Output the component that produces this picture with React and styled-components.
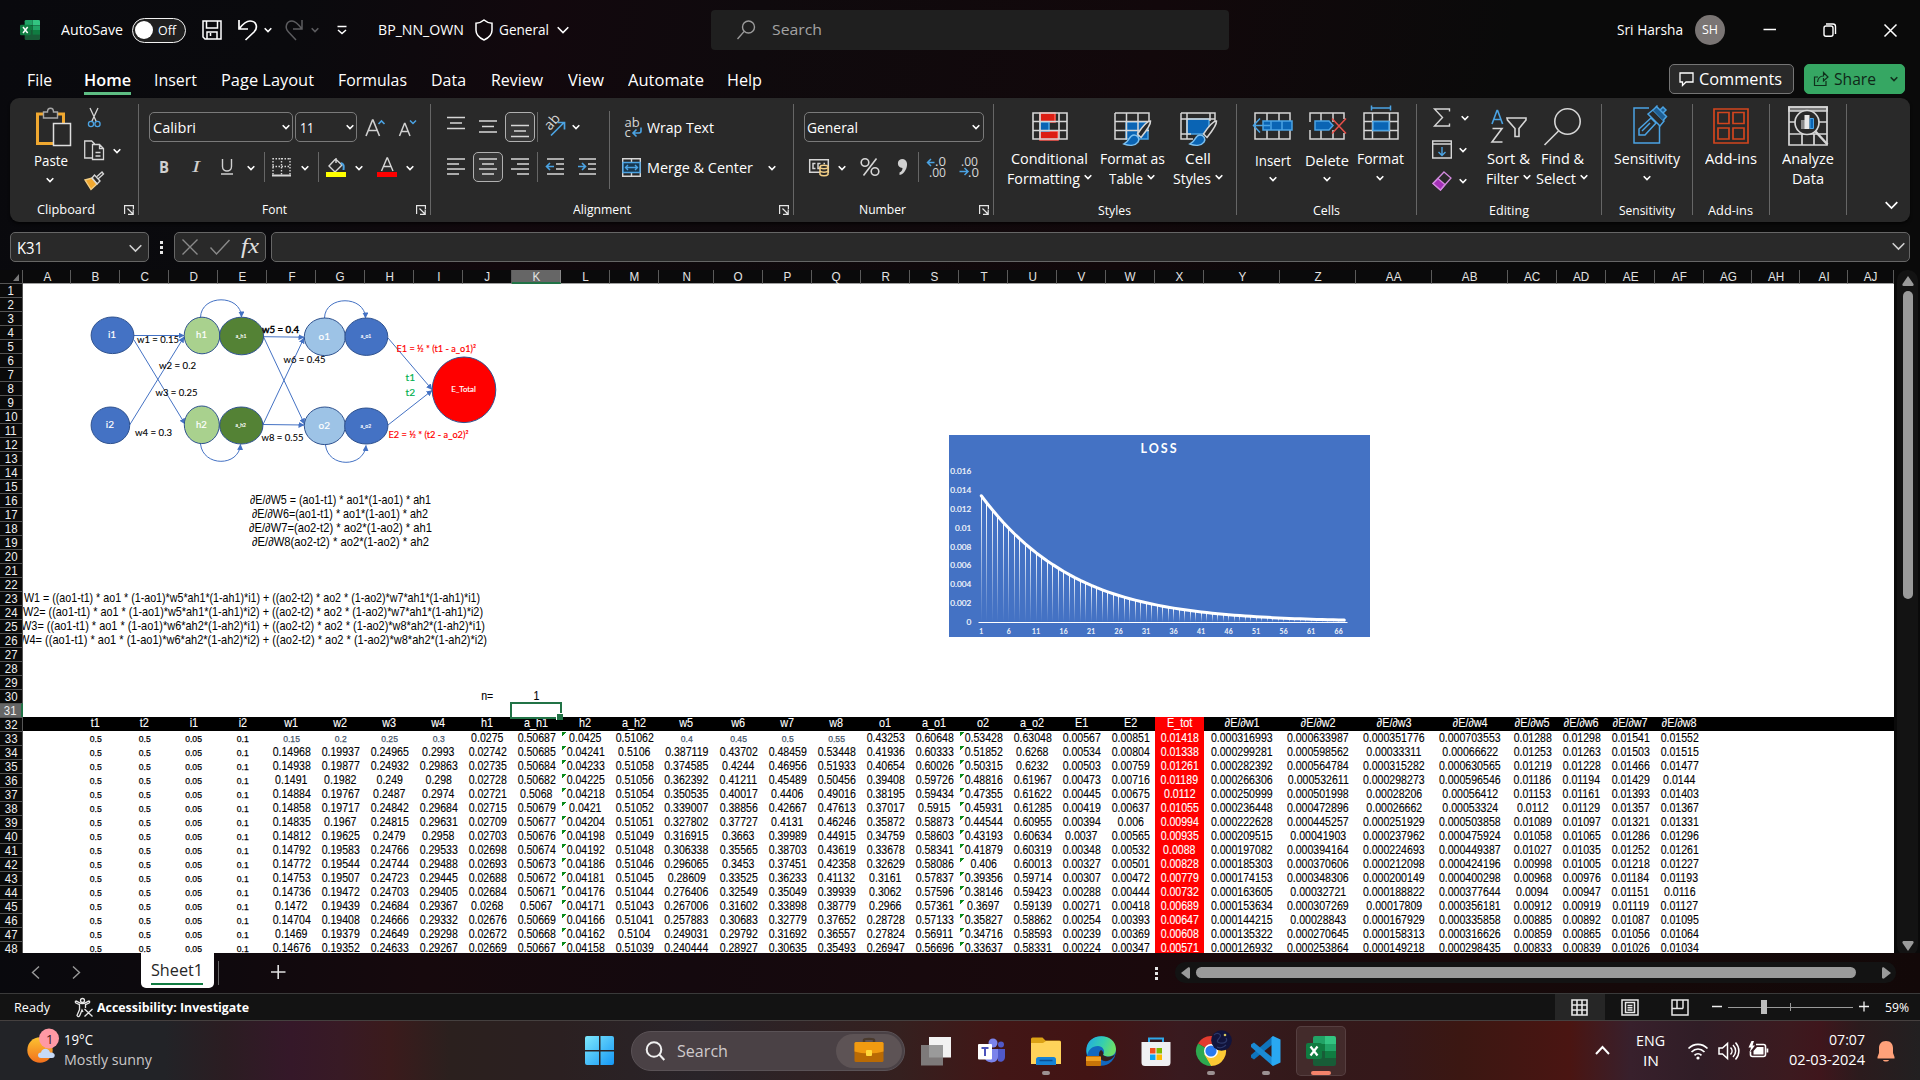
import React, { useLayoutEffect, useRef, useState } from 'react';
import styled, { createGlobalStyle } from 'styled-components';

const Global = createGlobalStyle`
  * { box-sizing: border-box; }
  html, body { margin: 0; padding: 0; background: #0a0a0c; overflow: hidden; }
  body { font-family: "Open Sans", "Noto Sans", sans-serif; color: #fff; }
  svg { display: block; flex: none; }
`;

/* ---------- text that keeps a fixed advance width ---------- */
const FitBox = styled.span`
  display: block;
  flex: none;
  width: ${p => p.$w}px;
  margin-left: ${p => p.$ml || 0}px;
  margin-top: ${p => p.$mt || 0}px;
  font-size: ${p => p.$s}px;
  font-weight: ${p => p.$b || 400};
  font-family: ${p => p.$f || 'inherit'};
  color: ${p => p.$c || 'inherit'};
  line-height: 20px;
  height: 20px;
  white-space: nowrap;
`;
const FitInner = styled.span`
  display: inline-block;
  transform-origin: 0 50%;
`;
function T({ w, s = 14.5, ml, mt, b, c, f, children }) {
  const ref = useRef(null);
  const [k, setK] = useState(1);
  useLayoutEffect(() => {
    const width = ref.current.getBoundingClientRect().width;
    if (width) setK(w / width);
  }, []);
  return (
    <FitBox $w={w} $s={s} $ml={ml} $mt={mt} $b={b} $c={c} $f={f}>
      <FitInner ref={ref} style={{ transform: `scaleX(${k})` }}>{children}</FitInner>
    </FitBox>
  );
}

/* ---------- drawing helpers ---------- */
const Drawing = styled.svg`
  width: ${p => p.$w}px;
  height: ${p => p.$h}px;
  margin-left: ${p => p.$ml || 0}px;
  margin-top: ${p => p.$mt || 0}px;
  overflow: visible;
`;
function Pic({ b, ml, mt, s = '#d6d6d6', sw = 1.4, children }) {
  const [, , w, h] = b.split(' ');
  return (
    <Drawing viewBox={b} $w={w} $h={h} $ml={ml} $mt={mt} fill="none" stroke={s} strokeWidth={sw}>
      {children}
    </Drawing>
  );
}
const Chev = ({ w = 8, ml, mt, c = '#fff', sw = 1.6 }) => (
  <Drawing viewBox={`0 0 ${w} ${w / 2 + 2}`} $w={w} $h={w / 2 + 2} $ml={ml} $mt={mt} fill="none" stroke={c} strokeWidth={sw}>
    <path d={`M.7 1.2L${w / 2} ${w / 2 + 0.5}L${w - 0.7} 1.2`} />
  </Drawing>
);

/* ---------- frame ---------- */
const Window = styled.div`
  width: 1920px;
  height: 1080px;
  display: flex;
  flex-direction: column;
  background: linear-gradient(100deg, #09090d 0%, #0a0a0d 14%, #12080d 26%, #0f0a0d 36%, #12080b 55%, #0a0a0a 72%, #0a0a0a 100%);
`;
const Row = styled.div`
  display: flex;
  align-items: ${p => p.$a || 'center'};
  height: ${p => p.$h}px;
  margin-left: ${p => p.$ml || 0}px;
  margin-top: ${p => p.$mt || 0}px;
  padding-top: ${p => p.$pt || 0}px;
  flex: none;
`;
const Col = styled.div`
  display: flex;
  flex-direction: column;
  flex: none;
  width: ${p => p.$w ? p.$w + 'px' : 'auto'};
  margin-left: ${p => p.$ml || 0}px;
  padding-top: ${p => p.$pt || 0}px;
  align-items: ${p => p.$a || 'flex-start'};
`;

/* ---------- title bar ---------- */
const Toggle = styled.div`
  width: 54px;
  height: 25px;
  margin-left: 9px;
  border: 1.5px solid #f2f2f2;
  border-radius: 13px;
  background: #202020;
  display: flex;
  align-items: center;
  padding-left: 2px;
`;
const Knob = styled.div`
  width: 18px;
  height: 18px;
  border-radius: 50%;
  background: #fff;
`;
const SearchBox = styled.div`
  width: 518px;
  height: 40px;
  margin-left: 142px;
  border-radius: 4px;
  background: #1f1f1f;
  display: flex;
  align-items: center;
`;
const Avatar = styled.div`
  width: 30px;
  height: 30px;
  margin-left: 12px;
  border-radius: 50%;
  background: #7a7574;
  display: flex;
  align-items: center;
  justify-content: center;
`;
const ExcelLogo = ({ ml, size = 20 }) => (
  <Drawing viewBox="0 0 30 30" $w={size} $h={size} $ml={ml} fill="none">
    <path d="M9 0h10v8H7V2a2 2 0 0 1 2-2z" fill="#21a366" />
    <path d="M19 0h9a2 2 0 0 1 2 2v6H19z" fill="#33c481" />
    <path d="M7 8h12v7H7z" fill="#107c41" />
    <path d="M19 8h11v7H19z" fill="#21a366" />
    <path d="M7 15h23v13a2 2 0 0 1-2 2H9a2 2 0 0 1-2-2z" fill="#185c37" />
    <path d="M19 15h11v7H19z" fill="#107c41" />
    <rect x="0" y="7" width="16" height="16" rx="2" fill="#107c41" />
    <path d="M4.500 10.500l7 9M11.500 10.500l-7 9" stroke="#fff" strokeWidth="2.200" />
  </Drawing>
);

function TitleBar() {
  return (
    <Row $h={60}>
      <ExcelLogo ml={20} />
      <T ml={21} w={62}>AutoSave</T>
      <Toggle><Knob /><T ml={5} w={18} s={13.5}>Off</T></Toggle>
      <Pic b="202 20 20 20" ml={16} s="#fff" sw={1.5}>
        <path d="M203 21h18v18h-16l-2-2zM206.500 21v7h11v-7M207 39v-7h10v7M210.500 33v3" />
      </Pic>
      <Pic b="237 19 20 22" ml={15} s="#fff" sw={1.7}>
        <path d="M239 20v9h9M239.500 28.500c3-4 6-7.500 10.500-7.500 7 0 8 7 4 11l-8.500 8" />
      </Pic>
      <Chev ml={7} w={8} />
      <Pic b="286 19 18 22" ml={13} s="#5c5c5f" sw={1.5}>
        <path d="M303 20v9h-9M302.500 28.500c-3-4-6-7.500-9.500-7.500-6 0-7.500 7-3.500 11l7.500 8" />
      </Pic>
      <Chev ml={8} c="#5c5c5f" />
      <Pic b="337 26 10 10" ml={18} s="#fff" sw={1.5}><path d="M337.500 27.500h9M338 31l4 3.500 4-3.500" /></Pic>
      <T ml={31} w={86}>BP_NN_OWN</T>
      <Pic b="476 19 18 22" ml={11} s="#fff" sw={1.5}>
        <path d="M485 20c2.500 2.200 5 3 8 3.300v7c0 4.500-3 7.500-8 9.700-5-2.200-8-5.200-8-9.700v-7c3-.3 5.500-1.100 8-3.300z" />
      </Pic>
      <T ml={6} w={50}>General</T>
      <Chev ml={8} w={12} />
      <SearchBox>
        <Pic b="738 20 18 20" ml={26} s="#9b9b9b" sw={1.4}><circle cx="749.500" cy="27" r="6" /><path d="M745.200 31.400L738.500 39" /></Pic>
        <T ml={17} w={50} c="#a3a3a3">Search</T>
      </SearchBox>
      <T ml={388} w={66} s={14}>Sri Harsha</T>
      <Avatar><T w={16} s={12}>SH</T></Avatar>
      <Pic b="1763 29 13 2" ml={38} s="#fff" sw={1.5}><path d="M1763.500 29.500h12.500" /></Pic>
      <Pic b="1823 23 13 14" ml={47} s="#fff" sw={1.4}>
        <rect x="1824" y="26" width="9" height="10.300" rx="2" /><path d="M1826 24h7a2.500 2.500 0 0 1 2.500 2.500v7.500" />
      </Pic>
      <Pic b="1883 24 13 13" ml={48} s="#fff" sw={1.5}><path d="M1883.500 24.500l12 12M1895.500 24.500l-12 12" /></Pic>
    </Row>
  );
}

/* ---------- ribbon tabs ---------- */
const TabItem = styled.div`
  margin-left: ${p => p.$ml}px;
  padding-top: 2px;
  height: 27px;
  border-bottom: 3px solid ${p => (p.$on ? '#5dbd83' : 'transparent')};
`;
const PillButton = styled.div`
  width: ${p => p.$w}px;
  height: 30px;
  margin-left: ${p => p.$ml}px;
  margin-top: -4px;
  border-radius: 5px;
  border: 1px solid ${p => (p.$green ? '#36a763' : '#757575')};
  background: ${p => (p.$green ? '#36a763' : '#292929')};
  display: flex;
  align-items: center;
`;
const TABS = [['File', 27, 25], ['Home', 32, 47], ['Insert', 23, 43], ['Page Layout', 24, 93], ['Formulas', 24, 69], ['Data', 24, 35], ['Review', 25, 52], ['View', 25, 36], ['Automate', 24, 76], ['Help', 23, 35]];
function RibbonTabs() {
  return (
    <Row $h={38} $a="flex-start" $pt={8}>
      {TABS.map(([t, ml, w]) => (
        <TabItem key={t} $ml={ml} $on={t === 'Home'}>
          <T w={w} s={16.3} b={t === 'Home' ? 600 : 400}>{t}</T>
        </TabItem>
      ))}
      <PillButton $w={125} $ml={907}>
        <Pic b="1679 71 15 15" ml={9} s="#fff" sw={1.3}><path d="M1680 72h13v9h-7l-3.500 3.500V81H1680z" /></Pic>
        <T ml={5} w={83} s={16} b={500}>Comments</T>
      </PillButton>
      <PillButton $w={101} $ml={10} $green>
        <Pic b="1814 72 14 14" ml={9} s="#10301c" sw={1.2}>
          <path d="M1818 77h-3.500v8.500h11.500V81M1817.500 82c.5-4 3-6 6-6v-3.500l4.500 4.500-4.500 4V78" />
        </Pic>
        <T ml={6} w={42} s={16} c="#0f2718">Share</T>
        <Chev ml={14} w={8} c="#10301c" />
      </PillButton>
    </Row>
  );
}

/* ---------- ribbon ---------- */
const RibbonPanel = styled.div`
  display: flex;
  height: 124px;
  width: 1900px;
  margin-left: 10px;
  border-radius: 9px;
  background: #292929;
  box-shadow: 0 2px 3px rgba(0, 0, 0, 0.6);
`;
const Group = styled.div`
  width: ${p => p.$w}px;
  height: 124px;
  display: flex;
  flex-direction: column;
  flex: none;
`;
const GroupBody = styled.div`
  height: 102px;
  display: flex;
  flex: none;
`;
const GroupSep = styled.div`
  width: 1px;
  flex: none;
  height: ${p => p.$h || 111}px;
  margin: ${p => (p.$mt === undefined ? 6 : p.$mt)}px 0 0 ${p => p.$ml || 0}px;
  background: #666;
`;
const Launcher = ({ ml }) => (
  <Pic b="0 0 10 10" ml={ml} s="#e6e6e6" sw={1.2}><path d="M.6 9V.6H9.400V4M3.500 3.500l5 5M9.200 4.500v4.900H4" /></Pic>
);
const Box = styled.div`
  width: ${p => p.$w}px;
  height: 30px;
  margin-left: ${p => p.$ml || 0}px;
  border: 1px solid ${p => p.$line || '#7a7a7a'};
  border-radius: 5px;
  background: ${p => p.$bg || '#292929'};
  display: flex;
  flex: none;
  align-items: center;
`;
const hl = (x1, x2, ...ys) => ys.map(y => `M${x1} ${y}h${x2 - x1}`).join('');

function Clipboard() {
  return (
    <Group $w={128}>
      <GroupBody>
        <Col $ml={24} $w={50} $a="flex-start">
          <Pic b="34 98 40 53" >
            <path d="M37.500 114h26v29.500h-26z" fill="none" stroke="#f0a830" strokeWidth="3" />
            <path d="M43.500 118v-6h4c0-5 6-5 6 0h4v6z" fill="#292929" stroke="#a8a8a8" />
            <path d="M53.500 123.500h17v22h-17z" fill="#292929" stroke="#dedede" strokeWidth="1.500" />
          </Pic>
          <T w={34} mt={0}>Paste</T>
          <Chev ml={12} mt={6} />
        </Col>
        <Col>
          <Row $h={22} $mt={9}>
            <Pic b="84 108 20 20" sw={1.3}>
              <path d="M90 108l6.500 14M98 108l-6.500 14" />
              <circle cx="91" cy="124" r="2.600" stroke="#4ba3e3" /><circle cx="97.500" cy="124" r="2.600" stroke="#4ba3e3" />
            </Pic>
          </Row>
          <Row $h={22} $mt={10}>
            <Pic b="84 139 20 20" sw={1.3}>
              <path d="M93 157h-8.300v-17h7l3 3M92.500 143.500h7l4 4v11h-11zM99.500 143.500v4h4M95.500 151.500h5M95.500 155h5" />
            </Pic>
            <Chev ml={9} mt={1} />
          </Row>
          <Row $h={22} $mt={9}>
            <Pic b="84 171 20 20">
              <path d="M85 180l7-2 5 6-6 5.500z" fill="#f0a830" stroke="#f3cf86" /><path d="M92 178l5 6 3-3-5.500-6zM97 176.500l5-4.500 1.500 2-5 4.500" />
            </Pic>
          </Row>
        </Col>
      </GroupBody>
      <Row $h={20}><T ml={27} w={58} s={12.6}>Clipboard</T><Launcher ml={29} /></Row>
    </Group>
  );
}

function FontGroup() {
  return (
    <Group $w={291}>
      <GroupBody>
        <Col $pt={14}>
          <Row $h={30}>
            <Box $ml={10} $w={144}><T ml={3} w={43} mt={1}>Calibri</T><Chev ml={86} /></Box>
            <Box $ml={2} $w={62}><T ml={4} w={14} mt={1}>11</T><Chev ml={32} /></Box>
            <Pic b="365 115 20 20" ml={8} s="#d0d0d0" sw={1.6}><path d="M366 134l6.500-16h.5l6.500 16M368.500 128.500h9" /><path d="M378.500 122l3-3 3 3" stroke="#4ba3e3" /></Pic>
            <Pic b="399 115 18 20" ml={14} s="#d0d0d0" sw={1.5}><path d="M399.500 134l5-12.500h.5l5 12.500M401.500 129.500h7" /><path d="M410 118.500l3 3 3-3" stroke="#4ba3e3" /></Pic>
          </Row>
          <Row $h={30} $mt={10}>
            <T ml={20} w={10} s={16.500} b={700} c="#d0d0d0">B</T>
            <T ml={23} w={8} s={17} c="#d0d0d0" f='"Liberation Serif", serif'><i>I</i></T>
            <Pic b="221 158 12 18" ml={21} s="#d0d0d0"><path d="M222.500 159v7.500c0 6 9 6 9 0V159M221 174h12" /></Pic>
            <Chev ml={14} mt={2} />
            <GroupSep $ml={9} $h={30} $mt={0} />
            <Pic b="272 158 20 19" ml={7}><path d="M272.500 158.700h18M272.500 166.500h18M273 158v17M281.500 158v17M290 158v17" strokeDasharray="1.500 1.500" /><path d="M272 175.500h19" strokeWidth="2" /></Pic>
            <Chev ml={9} mt={2} />
            <GroupSep $ml={9} $h={30} $mt={0} />
            <Pic b="326 157 20 20" ml={7} mt={0}>
              <path d="M329 166l6.500-7 6.500 6-7 7zM336 163v-5" /><path d="M341 163c3 1 3 3 2.500 7" stroke="#4ba3e3" strokeWidth="2" /><path d="M326 174.500h20" stroke="#ff0" strokeWidth="5" />
            </Pic>
            <Chev ml={9} mt={2} />
            <Pic b="377 157 20 20" ml={14}><path d="M381.500 171l5.500-13h.5l5.500 13M383.500 166.500h7.500" /><path d="M377 174.500h20" stroke="#f00" strokeWidth="5" /></Pic>
            <Chev ml={9} mt={2} />
          </Row>
        </Col>
      </GroupBody>
      <Row $h={20}><T ml={123} w={25} s={12.6}>Font</T><Launcher ml={129} /></Row>
    </Group>
  );
}

function Alignment() {
  return (
    <Group $w={362}>
      <GroupBody>
        <Col $pt={14}>
          <Row $h={30}>
            <Pic b="447 112 18 30" ml={16} sw={1.6}><path d={hl(447, 465, 117.500, 128.500) + hl(450, 462, 123)} /></Pic>
            <Pic b="479 112 18 30" ml={14} sw={1.6}><path d={hl(479, 497, 121, 132) + hl(482, 494, 126.500)} /></Pic>
            <Box $ml={8} $w={30} $line="#b0b0b0" $bg="#363636"><Pic b="511 112 18 30" ml={5} sw={1.6}><path d={hl(511, 529, 125.500, 136.500) + hl(514, 526, 131)} /></Pic></Box>
            <GroupSep $ml={2} $h={30} $mt={0} />
            <Pic b="545 115 21 24" ml={7} sw={1.7} s="#4ba3e3">
              <text x="0" y="0" transform="translate(550 131) rotate(-48)" fontSize="14" fill="#d6d6d6" stroke="none">ab</text>
              <path d="M551 135.500l13-13M557.500 122.500h7v7" />
            </Pic>
            <Chev ml={6} />
          </Row>
          <Row $h={30} $mt={10}>
            <Pic b="447 152 18 30" ml={16} sw={1.6}><path d={hl(447, 465, 159, 169) + hl(447, 459, 164, 174)} /></Pic>
            <Box $ml={8} $w={30} $line="#b0b0b0" $bg="#363636"><Pic b="479 152 18 30" ml={5} sw={1.6}><path d={hl(479, 497, 159, 169) + hl(482, 494, 164, 174)} /></Pic></Box>
            <Pic b="511 152 18 30" ml={8} sw={1.6}><path d={hl(511, 529, 159, 169) + hl(517, 529, 164, 174)} /></Pic>
            <GroupSep $ml={8} $h={30} $mt={0} />
            <Pic b="546 152 18 30" ml={8} sw={1.6}><path d={hl(547, 564, 159, 174) + hl(556, 564, 164, 169)} /><path d="M547 166.500h7M550 163l-3.500 3.500 3.500 3.500" stroke="#4ba3e3" /></Pic>
            <Pic b="578 152 18 30" ml={14} sw={1.6}><path d={hl(579, 596, 159, 174) + hl(588, 596, 164, 169)} /><path d="M578 166.500h7M582 163l3.500 3.500-3.500 3.500" stroke="#4ba3e3" /></Pic>
          </Row>
        </Col>
        <GroupSep $h={78} $mt={13} $ml={13} />
        <Col $pt={14}>
          <Row $h={30}>
            <Pic b="625 116 18 22" ml={15} sw={1.6}>
              <text x="624.500" y="126.500" fontSize="13" fill="#d6d6d6" stroke="none">ab</text>
              <text x="624.500" y="136.500" fontSize="13" fill="#d6d6d6" stroke="none">c</text>
              <path d="M641 127.500v3.500c0 1.500-1 2-2 2h-5.500M636.500 129.500l-3.500 3.500 3.500 3.500" stroke="#4ba3e3" />
            </Pic>
            <T ml={4} w={67} mt={1}>Wrap Text</T>
          </Row>
          <Row $h={30} $mt={10}>
            <Pic b="622 157 19 19" ml={12} sw={1.400}>
              <path d="M622.700 157.700h17.600v17.600h-17.600zM631.500 158v4M631.500 171v4" /><path d="M623 161.500h17v10h-17z" fill="#17374f" stroke="#4ba3e3" /><path d="M625.500 166.500h12M628 164l-2.500 2.500 2.500 2.500M635 164l2.500 2.500-2.500 2.500" stroke="#4ba3e3" />
            </Pic>
            <T ml={6} w={106} mt={1}>Merge &amp; Center</T>
            <Chev ml={15} mt={2} />
          </Row>
        </Col>
      </GroupBody>
      <Row $h={20}><T ml={142} w={58} s={12.6}>Alignment</T><Launcher ml={148} /></Row>
    </Group>
  );
}

function NumberGroup() {
  return (
    <Group $w={199}>
      <GroupBody>
        <Col $pt={14}>
          <Row $h={30}>
            <Box $ml={10} $w={180}><T ml={2} w={51} mt={1}>General</T><Chev ml={114} /></Box>
          </Row>
          <Row $h={30} $mt={10}>
            <Pic b="809 158 20 20" ml={15} sw={1.500}>
              <path d="M809.700 160.700h18.600v12.600h-18.600zM815.500 164.500h-2.500v5h2.500M820.500 164.500h-2.500v5h2.500M825 164.500h-1.500" />
              <path d="M820 168.500v7c1.500 1.800 6.500 1.800 8 0v-7z" fill="#292929" stroke="#f3cf86" /><ellipse cx="824" cy="168" rx="4" ry="1.700" fill="#292929" stroke="#f3cf86" /><path d="M820 172c1.500 1.500 6.500 1.500 8 0" stroke="#f3cf86" />
            </Pic>
            <Chev ml={9} mt={2} />
            <Pic b="861 157 20 20" ml={14} sw={1.600}><circle cx="866" cy="162.500" r="3.800" /><circle cx="876" cy="171.500" r="3.800" /><path d="M877.500 158.500l-13 17" /></Pic>
            <Pic b="898 157 10 20" ml={17} s="none"><path d="M903 159c6 0 6 7 3.500 11-1.500 3-3.500 4.500-6 5v-2.500c2-.8 3-2.500 3-4.500-6 0-6-9-.5-9z" fill="#d0d0d0" /></Pic>
            <GroupSep $ml={11} $h={30} $mt={0} />
            <Pic b="927 156 20 22" ml={8} sw={1.500} s="#4ba3e3">
              <text x="935" y="165.500" fontSize="12.500" fill="#d6d6d6" stroke="none" textLength="11" lengthAdjust="spacingAndGlyphs">.0</text><text x="929" y="177" fontSize="12.500" fill="#d6d6d6" stroke="none" textLength="17" lengthAdjust="spacingAndGlyphs">.00</text>
              <path d="M927.500 162.500h7M931 159l-3.500 3.500 3.500 3.500" />
            </Pic>
            <Pic b="959 156 20 22" ml={12} sw={1.500} s="#4ba3e3">
              <text x="961" y="165.500" fontSize="12.500" fill="#d6d6d6" stroke="none" textLength="17" lengthAdjust="spacingAndGlyphs">.00</text><text x="968" y="177" fontSize="12.500" fill="#d6d6d6" stroke="none" textLength="11" lengthAdjust="spacingAndGlyphs">.0</text>
              <path d="M959.500 171.500h8M964.500 168l3.500 3.500-3.500 3.500" />
            </Pic>
          </Row>
        </Col>
      </GroupBody>
      <Row $h={20}><T ml={65} w={47} s={12.6}>Number</T><Launcher ml={73} /></Row>
    </Group>
  );
}

const LabelLine = styled.div`
  display: flex;
  align-items: center;
  justify-content: center;
  height: 20px;
  gap: 4px;
`;
/* a tall ribbon button: picture on top, one or two label lines under it */
function Big({ w, ml, pic, a, aw, b, bw, chev, drop = 0 }) {
  return (
    <Col $w={w} $ml={ml} $a="center">
      {pic}
      <LabelLine><T w={aw} mt={drop}>{a}</T></LabelLine>
      <LabelLine>
        {b && <T w={bw}>{b}</T>}
        {chev && <Chev mt={b ? -5 : -2 + drop / 2} />}
      </LabelLine>
    </Col>
  );
}
const Brush = ({ dx = 0 }) => (
  <g transform={`translate(${dx} 0)`}>
    <path d="M1151.500 121c-3 0-9 7-13 13l3.500 3.500c4-5 10-13 9.500-16.500z" fill="#292929" stroke="#d6d6d6" />
    <path d="M1125 144c5 2 11 2 14-2 2-3 0-7-4-7-5 0-4 6-10 9z" fill="#0a64b4" stroke="#7cc0f0" />
  </g>
);

function Styles() {
  return (
    <Group $w={242}>
      <GroupBody>
        <Big w={84} ml={13} a="Conditional" aw={77} b="Formatting" bw={73} chev pic={
          <Pic b="1031 98 36 51" sw={1.600}>
            <path d="M1040 113h15v9h-15zM1040 131h18v9h-18z" fill="#dc1e14" stroke="#ff5a50" /><path d="M1040 122h9v9h-9z" fill="#0a64b4" stroke="#4ba3e3" />
            <path d="M1033 113h34v26h-34zM1033 121.500h34M1033 130.500h34M1040 113v26M1059 113v26" />
          </Pic>} />
        <Big w={66} ml={8} a="Format as" aw={65} b="Table" bw={34} chev pic={
          <Pic b="1115 98 36 51" sw={1.500}>
            <path d="M1127 122h22v17h-22z" fill="#0a64b4" stroke="#4ba3e3" /><path d="M1116 113h34v9M1116 113v26h12M1116 121.500h34M1116 130.500h34M1127.500 113v26M1139 113v26" /><Brush />
          </Pic>} />
        <Big w={50} ml={8} a="Cell" aw={26} b="Styles" bw={38} chev pic={
          <Pic b="1180 98 36 51" sw={1.500}>
            <path d="M1187 119h22v15h-22z" fill="#0a64b4" stroke="#4ba3e3" /><path d="M1181 113h34v8M1181 113v26h12M1181 119h34M1181 134h10M1187 113v26M1210 113v8" /><Brush dx={65} />
          </Pic>} />
      </GroupBody>
      <Row $h={22}><T ml={104} w={33} s={12.6}>Styles</T></Row>
    </Group>
  );
}

function Cells() {
  return (
    <Group $w={179}>
      <GroupBody>
        <Big w={44} ml={14} a="Insert" aw={36} chev drop={4} pic={
          <Pic b="1253 98 40 51" sw={1.500}>
            <path d="M1255 113h35v26h-35zM1267 113v26M1279 113v26" /><path d="M1263 121h29v9h-29z" fill="#0a64b4" stroke="#4ba3e3" /><path d="M1271 121v9M1282 121v9M1270 125.500h-16M1260 118.500l-6.500 7 6.500 7" stroke="#4ba3e3" />
          </Pic>} />
        <Big w={48} ml={8} a="Delete" aw={44} chev drop={4} pic={
          <Pic b="1308 98 38 51" sw={1.500}>
            <path d="M1310 122v-9h34v6M1310 130v9h34v-6M1321 113v9M1333 113v9M1321 130v9M1333 130v9" /><path d="M1315 121h14l4 4.500-4 4.500h-14z" fill="#0a64b4" stroke="#4ba3e3" /><path d="M1332 118.500l14 15M1346 118.500l-14 15" stroke="#e8504a" />
          </Pic>} />
        <Big w={48} ml={5} a="Format" aw={47} chev pic={
          <Pic b="1362 98 36 51" sw={1.500}>
            <path d="M1364 113h34v26h-34zM1364 121.500h34M1364 130.500h34M1372.500 113v26M1389.500 113v26" /><path d="M1373 121.500h16v9h-16z" fill="#0a64b4" stroke="#4ba3e3" /><path d="M1371.500 105.500v5M1390.500 105.500v5M1371.500 108h19" stroke="#4ba3e3" />
          </Pic>} />
      </GroupBody>
      <Row $h={22}><T ml={76} w={27} s={12.6}>Cells</T></Row>
    </Group>
  );
}

function Editing() {
  return (
    <Group $w={184}>
      <GroupBody>
        <Col $ml={15}>
          <Row $h={22} $mt={9}><Pic b="1432 108 20 20"><path d="M1449.500 111.500V109h-15l8 8.500-8 8.500h15v-2.500" /></Pic><Chev ml={9} /></Row>
          <Row $h={22} $mt={10}><Pic b="1432 140 20 20"><path d="M1432.700 141h18.600v17h-18.600zM1432.700 144h18.600" /><path d="M1442 147v8M1438.500 152l3.500 3.500 3.500-3.500" stroke="#4ba3e3" /></Pic><Chev ml={7} /></Row>
          <Row $h={22} $mt={9}><Pic b="1432 171 20 20" sw={1.300} s="#d48be0"><path d="M1444 172l7 6-10.500 12-7.500-6.500z" /><path d="M1438 178.500l7 6-4.500 5.500-7.500-6.500z" fill="#a530b8" /></Pic><Chev ml={7} /></Row>
        </Col>
        <Big w={50} ml={14} a="Sort &" aw={43} b="Filter" bw={33} chev pic={
          <Pic b="1486 98 36 51" sw={1.600}>
            <path d="M1488 124l5-13.500h.6l5 13.500M1489.600 119.500h7.500" stroke="#4ba3e3" /><path d="M1488.500 128.500h9.500l-10 13.500h10.500" /><path d="M1503 118h19v2l-7 8.500v8h-4v-8l-7.500-8.500z" />
          </Pic>} />
        <Big w={52} ml={3} a="Find &" aw={43} b="Select" bw={40} chev pic={
          <Pic b="1543 98 37 51" sw={1.600}><circle cx="1566.500" cy="121.500" r="12.700" /><path d="M1557.500 131l-14 14" /></Pic>} />
      </GroupBody>
      <Row $h={22}><T ml={72} w={40} s={12.6}>Editing</T></Row>
    </Group>
  );
}

function TailGroups() {
  return (
    <>
      <Group $w={90}>
        <GroupBody>
          <Big w={70} ml={10} a="Sensitivity" aw={66} chev pic={
            <Pic b="1629 98 36 51" s="#4ba3e3" sw={1.500}>
              <path d="M1649 108h-15v35h25.500v-18" /><path d="M1639 129l12-11 5 5-11 12-6 0z" /><path d="M1642 131l8-8" /><path d="M1648 114l5-4 11 11-4 5z" /><path d="M1653 110l3.500-3.500 10 10-3.500 4M1655 108l2.500-2.500M1660 110l3-3 3 3-3 3" fill="#1f5e92" />
            </Pic>} />
        </GroupBody>
        <Row $h={22}><T ml={17} w={56} s={12.6}>Sensitivity</T></Row>
      </Group>
      <GroupSep />
      <Group $w={76}>
        <GroupBody>
          <Big w={60} ml={8} a="Add-ins" aw={52} pic={
            <Pic b="1713 98 36 51" s="#d2451e" sw={1.700}><path d="M1714 109h34v34h-34zM1718 112.500h11v11h-11zM1733 112.500h11v11h-11zM1718 128h11v11h-11zM1733 128h11v11h-11z" /></Pic>} />
        </GroupBody>
        <Row $h={22}><T ml={15} w={45} s={12.6}>Add-ins</T></Row>
      </Group>
      <GroupSep />
      <Group $w={76}>
        <GroupBody>
          <Big w={60} ml={8} a="Analyze" aw={52} b="Data" bw={32} pic={
            <Pic b="1788 98 40 51" sw={1.700}>
              <path d="M1789 107h38v4h-38z" fill="#777" /><path d="M1789 107v38h38v-38zM1789 122h38M1789 134h38M1802 134v11M1814 134v11" />
              <circle cx="1807" cy="122.500" r="12" fill="#292929" /><path d="M1815.500 131.500l12 13" strokeWidth="2.500" /><path d="M1801 120h4v9h-4z" fill="#888" stroke="none" /><path d="M1804.500 115h5v14h-5z" fill="#e8e8e8" stroke="none" /><path d="M1810 118.500h3.500v10h-3.500z" fill="#0a64b4" stroke="#4ba3e3" strokeWidth="1" />
            </Pic>} />
        </GroupBody>
      </Group>
      <GroupSep />
      <Chev ml={38} mt={103} w={13} sw={1.700} />
    </>
  );
}

/* ---------- formula bar ---------- */
const Dots = () => <Pic b="0 0 4 14" ml={0} s="none">{[0, 5, 10].map(y => <rect key={y} x="1" y={y} width="3" height="3" fill="#e6e6e6" />)}</Pic>;
function FormulaBar() {
  return (
    <Row $h={48} $a="flex-start" $pt={10}>
      <Box $w={139} $ml={10} $line="#666"><T ml={6} w={26} s={15.500} mt={1}>K31</T><Chev ml={86} w={13} c="#d0d0d0" mt={2} /></Box>
      <Row $h={30} $ml={10} $mt={1}><Dots /></Row>
      <Box $w={92} $ml={11} $line="#666">
        <Pic b="182 239 16 16" ml={7} s="#8a8a8a"><path d="M182.500 239.500l15 15M197.500 239.500l-15 15" /></Pic>
        <Pic b="210 239 20 16" ml={12} s="#8a8a8a"><path d="M210.500 247.500l6 6.500L229.500 240" /></Pic>
        <T ml={11} w={18} s={22} c="#e0e0e0" mt={-2} f='"Liberation Serif", serif'><i>fx</i></T>
      </Box>
      <Box $w={1639} $ml={5} $line="#666"><Chev ml={1620} w={13} c="#d0d0d0" mt={-2} /></Box>
    </Row>
  );
}

/* ---------- worksheet ---------- */
const COLS = [48, 49, 49, 49, 49, 49, 49, 49, 49, 49, 49, 49, 49, 55, 49, 49, 49, 49, 49, 49, 49, 49, 49, 49, 76, 76, 76, 76, 49, 49, 49, 49, 48, 48, 48, 46];
const NAMES = 'A B C D E F G H I J K L M N O P Q R S T U V W X Y Z AA AB AC AD AE AF AG AH AI AJ'.split(' ');
const TEMPLATE = '23px ' + COLS.map(w => w + 'px').join(' ');
const HEAD = 't1 t2 i1 i2 w1 w2 w3 w4 h1 a_h1 h2 a_h2 w5 w6 w7 w8 o1 a_o1 o2 a_o2 E1 E2 E_tot ∂E/∂w1 ∂E/∂w2 ∂E/∂w3 ∂E/∂w4 ∂E/∂w5 ∂E/∂w6 ∂E/∂w7 ∂E/∂w8'.split(' ');
const rep = v => Array(16).fill(v).join(' ');
const DATA = [
  rep('0.5'), rep('0.5'), rep('0.05'), rep('0.1'),
  '0.15 0.14968 0.14938 0.1491 0.14884 0.14858 0.14835 0.14812 0.14792 0.14772 0.14753 0.14736 0.1472 0.14704 0.1469 0.14676',
  '0.2 0.19937 0.19877 0.1982 0.19767 0.19717 0.1967 0.19625 0.19583 0.19544 0.19507 0.19472 0.19439 0.19408 0.19379 0.19352',
  '0.25 0.24965 0.24932 0.249 0.2487 0.24842 0.24815 0.2479 0.24766 0.24744 0.24723 0.24703 0.24684 0.24666 0.24649 0.24633',
  '0.3 0.2993 0.29863 0.298 0.2974 0.29684 0.29631 0.2958 0.29533 0.29488 0.29445 0.29405 0.29367 0.29332 0.29298 0.29267',
  '0.0275 0.02742 0.02735 0.02728 0.02721 0.02715 0.02709 0.02703 0.02698 0.02693 0.02688 0.02684 0.0268 0.02676 0.02672 0.02669',
  '0.50687 0.50685 0.50684 0.50682 0.5068 0.50679 0.50677 0.50676 0.50674 0.50673 0.50672 0.50671 0.5067 0.50669 0.50668 0.50667',
  '0.0425 0.04241 0.04233 0.04225 0.04218 0.0421 0.04204 0.04198 0.04192 0.04186 0.04181 0.04176 0.04171 0.04166 0.04162 0.04158',
  '0.51062 0.5106 0.51058 0.51056 0.51054 0.51052 0.51051 0.51049 0.51048 0.51046 0.51045 0.51044 0.51043 0.51041 0.5104 0.51039',
  '0.4 0.387119 0.374585 0.362392 0.350535 0.339007 0.327802 0.316915 0.306338 0.296065 0.28609 0.276406 0.267006 0.257883 0.249031 0.240444',
  '0.45 0.43702 0.4244 0.41211 0.40017 0.38856 0.37727 0.3663 0.35565 0.3453 0.33525 0.32549 0.31602 0.30683 0.29792 0.28927',
  '0.5 0.48459 0.46956 0.45489 0.4406 0.42667 0.4131 0.39989 0.38703 0.37451 0.36233 0.35049 0.33898 0.32779 0.31692 0.30635',
  '0.55 0.53448 0.51933 0.50456 0.49016 0.47613 0.46246 0.44915 0.43619 0.42358 0.41132 0.39939 0.38779 0.37652 0.36557 0.35493',
  '0.43253 0.41936 0.40654 0.39408 0.38195 0.37017 0.35872 0.34759 0.33678 0.32629 0.3161 0.3062 0.2966 0.28728 0.27824 0.26947',
  '0.60648 0.60333 0.60026 0.59726 0.59434 0.5915 0.58873 0.58603 0.58341 0.58086 0.57837 0.57596 0.57361 0.57133 0.56911 0.56696',
  '0.53428 0.51852 0.50315 0.48816 0.47355 0.45931 0.44544 0.43193 0.41879 0.406 0.39356 0.38146 0.3697 0.35827 0.34716 0.33637',
  '0.63048 0.6268 0.6232 0.61967 0.61622 0.61285 0.60955 0.60634 0.60319 0.60013 0.59714 0.59423 0.59139 0.58862 0.58593 0.58331',
  '0.00567 0.00534 0.00503 0.00473 0.00445 0.00419 0.00394 0.0037 0.00348 0.00327 0.00307 0.00288 0.00271 0.00254 0.00239 0.00224',
  '0.00851 0.00804 0.00759 0.00716 0.00675 0.00637 0.006 0.00565 0.00532 0.00501 0.00472 0.00444 0.00418 0.00393 0.00369 0.00347',
  '0.01418 0.01338 0.01261 0.01189 0.0112 0.01055 0.00994 0.00935 0.0088 0.00828 0.00779 0.00732 0.00689 0.00647 0.00608 0.00571',
  '0.000316993 0.000299281 0.000282392 0.000266306 0.000250999 0.000236448 0.000222628 0.000209515 0.000197082 0.000185303 0.000174153 0.000163605 0.000153634 0.000144215 0.000135322 0.000126932',
  '0.000633987 0.000598562 0.000564784 0.000532611 0.000501998 0.000472896 0.000445257 0.00041903 0.000394164 0.000370606 0.000348306 0.00032721 0.000307269 0.00028843 0.000270645 0.000253864',
  '0.000351776 0.00033311 0.000315282 0.000298273 0.00028206 0.00026662 0.000251929 0.000237962 0.000224693 0.000212098 0.000200149 0.000188822 0.00017809 0.000167929 0.000158313 0.000149218',
  '0.000703553 0.00066622 0.000630565 0.000596546 0.00056412 0.00053324 0.000503858 0.000475924 0.000449387 0.000424196 0.000400298 0.000377644 0.000356181 0.000335858 0.000316626 0.000298435',
  '0.01288 0.01253 0.01219 0.01186 0.01153 0.0112 0.01089 0.01058 0.01027 0.00998 0.00968 0.0094 0.00912 0.00885 0.00859 0.00833',
  '0.01298 0.01263 0.01228 0.01194 0.01161 0.01129 0.01097 0.01065 0.01035 0.01005 0.00976 0.00947 0.00919 0.00892 0.00865 0.00839',
  '0.01541 0.01503 0.01466 0.01429 0.01393 0.01357 0.01321 0.01286 0.01252 0.01218 0.01184 0.01151 0.01119 0.01087 0.01056 0.01026',
  '0.01552 0.01515 0.01477 0.0144 0.01403 0.01367 0.01331 0.01296 0.01261 0.01227 0.01193 0.0116 0.01127 0.01095 0.01064 0.01034',
].map(s => s.split(' '));

const SHEET_FONT = '"Liberation Sans", sans-serif';
const Area = styled.div`display: flex; height: 683px; flex: none;`;
const Sheet = styled.div`
  position: relative;
  width: 1894px;
  height: 683px;
  overflow: hidden;
  background: #fff;
  font-family: ${SHEET_FONT};
  font-size: 12.6px;
  color: #000;
`;
const GridRow = styled.div`
  display: grid;
  grid-template-columns: ${TEMPLATE};
  height: ${p => p.$h || 14}px;
  background: ${p => p.$bg || 'transparent'};
`;
const ColHead = styled.div`
  height: 14px;
  position: relative;
  z-index: 1;
  display: flex;
  align-items: center;
  justify-content: center;
  padding-left: ${p => (p.$corner ? 0 : 1)}px;
  font-size: 13px;
  color: #e4e4e4;
  background: ${p => (p.$on ? '#666' : '#0a0a0b')};
  border-right: 1px solid ${p => (p.$on ? '#888' : '#5a5a5a')};
  border-bottom: ${p => (p.$on ? '2px solid #217346' : '1px solid #a0a0a0')};
`;
const RowHead = styled.div`
  position: relative;
  z-index: 2;
  height: 14px;
  width: 23px;
  display: flex;
  align-items: center;
  justify-content: center;
  font-size: 13px;
  line-height: 13px;
  color: #f0f0f0;
  background: ${p => (p.$on ? '#666' : '#0a0a0a')};
  border-top: 1px solid #555;
  border-right: ${p => (p.$on ? '2px solid #217346' : '1px solid #555')};
`;
const Cell = styled.div`
  grid-column: ${p => p.$col};
  height: 14px;
  display: flex;
  align-items: center;
  justify-content: center;
  white-space: nowrap;
  line-height: 14px;
  font-size: ${p => (p.$small ? 9.8 : 12.6)}px;
  padding-top: ${p => (p.$small ? 1 : 0)}px;
  padding-bottom: ${p => (p.$head ? 2 : 0)}px;
  color: ${p => p.$c || '#000'};
  background: ${p => p.$bg || 'transparent'};
  -webkit-text-stroke: ${p => (p.$small ? 0.25 : 0.12)}px currentColor;
`;
const FlagCell = styled(Cell)`
  background: linear-gradient(135deg, #0a8a1a 0 3px, transparent 3px) no-repeat 1px 1px / 5px 5px;
`;
/* a long text that runs over the empty cells beside it and stops at the row numbers */
const Overflow = styled.div`
  grid-column: 2 / 13;
  height: 14px;
  overflow: hidden;
  display: flex;
  align-items: center;
`;
const Narrow = styled.span`
  display: inline-block;
  transform: scaleX(${p => p.$k || 0.84});
`;

const FORMULAS = {
  16: [227, 181, '∂E/∂W5 = (ao1-t1) * ao1*(1-ao1) * ah1'],
  17: [229, 176, '∂E/∂W6=(ao1-t1) * ao1*(1-ao1) * ah2'],
  18: [226, 183, '∂E/∂W7=(ao2-t2) * ao2*(1-ao2) * ah1'],
  19: [229, 177, '∂E/∂W8(ao2-t2) * ao2*(1-ao2) * ah2'],
  23: [1, 456, 'W1 = ((ao1-t1) * ao1 * (1-ao1)*w5*ah1*(1-ah1)*i1) + ((ao2-t2) * ao2 * (1-ao2)*w7*ah1*(1-ah1)*i1)'],
  24: [0, 460, 'W2= ((ao1-t1) * ao1 * (1-ao1)*w5*ah1*(1-ah1)*i2) + ((ao2-t2) * ao2 * (1-ao2)*w7*ah1*(1-ah1)*i2)'],
  25: [-2, 464, 'W3= ((ao1-t1) * ao1 * (1-ao1)*w6*ah2*(1-ah2)*i1) + ((ao2-t2) * ao2 * (1-ao2)*w8*ah2*(1-ah2)*i1)'],
  26: [-4, 468, 'W4= ((ao1-t1) * ao1 * (1-ao1)*w6*ah2*(1-ah2)*i2) + ((ao2-t2) * ao2 * (1-ao2)*w8*ah2*(1-ah2)*i2)'],
};

function SheetRow({ n }) {
  const f = FORMULAS[n];
  return (
    <GridRow $bg={n === 32 ? '#000' : undefined}>
      <RowHead $on={n === 31}><Narrow $k={0.88}>{n}</Narrow></RowHead>
      {f && <Overflow><T ml={f[0]} w={f[1]} s={12.6} f={SHEET_FONT}>{f[2]}</T></Overflow>}
      {n === 30 && <><Cell $col={11}><Narrow>n=</Narrow></Cell><Cell $col={12}><Narrow>1</Narrow></Cell></>}
      {n === 32 && HEAD.map((h, i) => (
        <Cell key={i} $col={i + 3} $c="#fff" $head $bg={i === 22 ? '#f00' : undefined}><Narrow $k={0.86}>{h}</Narrow></Cell>
      ))}
      {n > 32 && DATA.map((d, i) => {
        const input = n === 33 && ((i > 3 && i < 8) || (i > 11 && i < 16));
        const small = i < 4 || input;
        const C = i === 10 || i === 18 ? FlagCell : Cell;
        return (
          <C key={i} $col={i + 3} $small={small} $c={input ? '#44546a' : i === 22 ? '#fff' : undefined} $bg={i === 22 ? '#f00' : undefined}>
            <Narrow $k={small ? 0.88 : 0.84}>{d[n - 33]}</Narrow>
          </C>
        );
      })}
    </GridRow>
  );
}

const Selection = styled.div`
  position: absolute;
  left: 510px;
  top: 432px;
  width: 52px;
  height: 17px;
  border: 2px solid #217346;
  z-index: 3;
  &::after {
    content: '';
    position: absolute;
    right: -3px;
    bottom: -3px;
    width: 6px;
    height: 6px;
    background: #217346;
    border: 1px solid #fff;
    border-right: 0;
    border-bottom: 0;
  }
`;
const Floating = styled.svg`
  position: absolute;
  left: ${p => p.$x}px;
  top: ${p => p.$y}px;
  width: ${p => p.$w}px;
  height: ${p => p.$h}px;
  font-family: Lato, "Open Sans", sans-serif;
`;

const NODES = [
  ['i1', 112.5, 335.3, 21.4, 18.3, '#4472c4', 10], ['i2', 110.4, 425.3, 19.3, 18.3, '#4472c4', 10],
  ['h1', 202, 335.5, 17.8, 18.3, '#a9d18e', 9.5], ['a_h1', 241.6, 336, 22, 18.8, '#548235', 5],
  ['h2', 201.8, 424.8, 17.5, 18.8, '#a9d18e', 9.5], ['a_h2', 241.3, 425.5, 21.6, 18.5, '#548235', 5],
  ['o1', 324.8, 336.8, 20.5, 18.8, '#9dc3e6', 10], ['a_o1', 366.4, 336.7, 21.4, 18.7, '#4472c4', 5],
  ['o2', 324.8, 425.8, 20.5, 18.8, '#9dc3e6', 10], ['a_o2', 366.3, 426, 21.6, 18, '#4472c4', 5],
  ['E_Total', 464, 389.8, 31.8, 32.8, '#f00', 7.8],
];
const NOTES = [
  ['w1 = 0.15', 137, 343, 42], ['w2 = 0.2', 159, 369, 37], ['w3 = 0.25', 155.500, 396, 42], ['w4 = 0.3', 135, 436, 37],
  ['w5 = 0.4', 262, 333, 37, '#000', 0.45], ['w6 = 0.45', 283.500, 363, 42], ['w8 = 0.55', 261.500, 441, 42],
  ['E1 = ½ * (t1 - a_o1)²', 396.500, 352, 79.500, '#f00', 0.18], ['E2 = ½ * (t2 - a_o2)²', 388.500, 438, 80, '#f00', 0.18],
  ['t1', 405.500, 381, 9.500, '#00b050', 0.15], ['t2', 405.500, 396, 9.500, '#00b050', 0.15],
];
function Network() {
  return (
    <Floating $x={80} $y={20} $w={430} $h={190} viewBox="80 290 430 190">
      <defs>
        <marker id="tip" viewBox="0 0 6 6" refX="5.500" refY="3" markerWidth="6" markerHeight="6" markerUnits="userSpaceOnUse" orient="auto">
          <path d="M0 0L6 3L0 6z" fill="#4472c4" />
        </marker>
      </defs>
      <g fill="none" stroke="#4472c4" strokeWidth="1">
        {['M134 335.500H184', 'M134 340L185 424', 'M129.600 425L184 337', 'M263.600 336.700L304 337.200', 'M263.600 337L304.500 424',
          'M263 424.500L304 425', 'M263 424.500L304 338', 'M388 338L432 389.500', 'M388 425L432 390.500',
          'M200.500 317.500C201 294 241 294 241.500 317', 'M200.500 444C203 467 239 467 240.500 444.500',
          'M324.500 318C325 295 365 295 365.500 318', 'M325.500 445C328 468 364 468 366 445.500'].map(d => <path key={d} d={d} markerEnd="url(#tip)" />)}
      </g>
      {NODES.map(([t, x, y, rx, ry, c, s]) => (
        <g key={t}>
          <ellipse cx={x} cy={y} rx={rx} ry={ry} fill={c} stroke="#2f528f" strokeWidth="1" />
          <text x={x - 0.5} y={y + s * 0.3} fontSize={s} fill="#fff" stroke="#fff" strokeWidth=".15" textAnchor="middle">{t}</text>
        </g>
      ))}
      {NOTES.map(([t, x, y, w, c = '#000', b = 0.1]) => (
        <text key={t} x={x} y={y} fontSize="9.800" fill={c} stroke={c} strokeWidth={b} textLength={w} lengthAdjust="spacingAndGlyphs">{t}</text>
      ))}
    </Floating>
  );
}

const loss = DATA[22].slice(1).map(Number);
while (loss.length < 67) loss.push(loss[loss.length - 1] * 0.9375);
function LossChart() {
  const px = i => 981.3 + i * 5.5;
  const py = v => 622 - v * 9437;
  return (
    <Floating $x={949} $y={165} $w={421} $h={202} viewBox="949 435 421 202">
      <defs>
        {loss.map((v, i) => (
          <linearGradient key={i} id={`d${i}`} gradientUnits="userSpaceOnUse" x1="0" y1={py(v)} x2="0" y2="622">
            <stop offset="0" stopColor="#fff" /><stop offset="1" stopColor="#fff" stopOpacity="0" />
          </linearGradient>
        ))}
      </defs>
      <rect x="949" y="435" width="421" height="202" fill="#4472c4" />
      <text x="1140.500" y="453" fontSize="12.500" fontWeight="700" fill="#fff" textLength="36">LOSS</text>
      <g fill="#fff" fontSize="8.200" stroke="#fff" strokeWidth=".2" opacity=".95">
        {['0.016', '0.014', '0.012', '0.01', '0.008', '0.006', '0.004', '0.002', '0'].map((t, i) => (
          <text key={t} x="971.300" y={474 + i * 18.880} textAnchor="end">{t}</text>
        ))}
        {Array.from({ length: 14 }, (_, i) => (
          <text key={i} x={px(i * 5)} y="634.300" fontSize="6.800" letterSpacing=".4" textAnchor="middle">{1 + i * 5}</text>
        ))}
      </g>
      {loss.map((v, i) => <rect key={i} x={Math.floor(px(i))} y={py(v)} width="1" height={622 - py(v)} fill={`url(#d${i})`} />)}
      <path d="M978.500 622.500H1347.500" stroke="#fff" strokeWidth="1" />
      <path d={'M' + loss.map((v, i) => `${px(i)} ${py(v)}`).join('L')} fill="none" stroke="#fff" strokeWidth="3" strokeLinecap="round" strokeLinejoin="round" />
    </Floating>
  );
}

const VTrack = styled.div`
  width: 21px;
  height: 686px;
  margin-left: 3px;
  border-radius: 10px;
  background: #131313;
  display: flex;
  flex-direction: column;
  align-items: center;
  justify-content: space-between;
  padding: 6px 0 5px;
`;
const VThumb = styled.div`
  width: 10px;
  height: 308px;
  border-radius: 5px;
  background: #9a9a9a;
  margin-top: 5px;
  margin-bottom: auto;
`;
function Worksheet() {
  return (
    <Area>
      <Sheet>
        <GridRow $h={13}>
          <ColHead $corner><Pic b="0 0 22 13" s="none"><path d="M19 4v7h-6z" fill="#777" /></Pic></ColHead>
          {NAMES.map(n => <ColHead key={n} $on={n === 'K'}><Narrow $k={0.9}>{n}</Narrow></ColHead>)}
        </GridRow>
        {Array.from({ length: 48 }, (_, i) => <SheetRow key={i} n={i + 1} />)}
        <Selection />
        <Network />
        <LossChart />
      </Sheet>
      <VTrack>
        <Pic b="0 0 12 10" s="none"><path d="M6 0L11.500 8c.4 1-.2 2-1 2h-9c-1 0-1.400-1-1-2z" fill="#9a9a9a" /></Pic>
        <VThumb />
        <Pic b="0 0 12 10" s="none"><path d="M6 10L.5 2C.1 1 .7 0 1.500 0h9c1 0 1.400 1 1 2z" fill="#9a9a9a" /></Pic>
      </VTrack>
    </Area>
  );
}

/* ---------- sheet tabs + status ---------- */
const SheetBar = styled.div`
  height: 40px;
  flex: none;
  display: flex;
  align-items: flex-start;
  background: linear-gradient(90deg, #09090d 0, #0d090d 9%, #16090d 22%, #14090e 36%, #1a090c 60%, #150909 85%, #120808 100%);
`;
const SheetTab = styled.div`
  width: 73px;
  height: 35px;
  margin-left: 61px;
  border-radius: 0 0 5px 5px;
  background: #fff;
  padding: 7px 0 0 10px;
`;
const TabUnderline = styled.div`
  width: 52px;
  height: 2px;
  margin-top: 3px;
  background: #107c41;
`;
const HTrack = styled.div`
  width: 721px;
  height: 21px;
  margin: 9px 0 0 17px;
  border-radius: 10px;
  background: #131313;
  display: flex;
  align-items: center;
  justify-content: space-between;
  padding: 0 5px 0 6px;
`;
const HThumb = styled.div`
  width: 660px;
  height: 11px;
  border-radius: 6px;
  background: #9a9a9a;
  margin-left: 6px;
  margin-right: auto;
`;
const StatusBar = styled.div`
  height: 27px;
  flex: none;
  display: flex;
  align-items: center;
  background: #131313;
  border-top: 1px solid #3a3a3a;
`;
const ViewButton = styled.div`
  width: 50px;
  height: 26px;
  margin-left: ${p => p.$ml || 0}px;
  background: ${p => (p.$on ? '#262626' : 'transparent')};
  display: flex;
  align-items: center;
  justify-content: center;
`;
function Bottom() {
  return (
    <>
      <SheetBar>
        <Pic b="32 966 8 13" ml={32} mt={13} s="#9a9a9a"><path d="M39 966.500l-6.500 6 6.500 6" /></Pic>
        <Pic b="72 966 8 13" ml={32} mt={13} s="#9a9a9a"><path d="M73 966.500l6.500 6-6.500 6" /></Pic>
        <SheetTab><T w={52} s={16.300} c="#262626" b={500}>Sheet1</T><TabUnderline /></SheetTab>
        <GroupSep $h={24} $mt={8} $ml={4} />
        <Pic b="271 965 14 14" ml={52} mt={12} s="#e0e0e0" sw={1.600}><path d="M271 972h14.500M278.200 965v14" /></Pic>
        <Row $h={40} $ml={869} $mt={1}><Dots /></Row>
        <HTrack>
          <Pic b="0 0 9 12" s="none"><path d="M0 6L7 .5c1-.4 2 .2 2 1v9c0 1-1 1.400-2 1z" fill="#9a9a9a" /></Pic>
          <HThumb />
          <Pic b="0 0 9 12" s="none"><path d="M9 6L2 .5C1 .1 0 .7 0 1.500v9c0 1 1 1.400 2 1z" fill="#9a9a9a" /></Pic>
        </HTrack>
      </SheetBar>
      <StatusBar>
        <T ml={14} w={36} s={12.800}>Ready</T>
        <Pic b="75 998 19 19" ml={25} s="#e6e6e6" sw={1.300}>
          <circle cx="82.500" cy="1000.500" r="2" /><path d="M75.500 1001c-1 2 1 2.500 4 3.500v5l-2.500 6c1 2 2.500 1 3-.500l2-5 1 2M89.500 1001c1 2-1 2.500-4 3.500v3.500M75.500 1001c2 0 4 2.500 7 2.500s5-2.500 7-2.500M84.500 1009l8 7.500M92.500 1009l-8 7.500" />
        </Pic>
        <T ml={3} w={152} s={12.800} b={700}>Accessibility: Investigate</T>
        <ViewButton $ml={1306} $on><Pic b="1572 998 17 17" sw={1.600} s="#e8e8e8"><path d="M1572 999h15v15h-15zM1572 1004h15M1572 1009h15M1577 999v15M1582 999v15" /></Pic></ViewButton>
        <ViewButton><Pic b="1621 998 18 17" sw={1.500} s="#e8e8e8"><path d="M1622 999h16v15h-16zM1625.500 1001.500h9v10h-9zM1627.500 1004.500h5M1627.500 1006.700h5M1627.500 1009h5" /></Pic></ViewButton>
        <ViewButton><Pic b="1671 998 18 17" sw={1.500} s="#e8e8e8"><path d="M1672 999h16v15h-16zM1677 999v8.500M1683 999v8.500M1672 1007.500h11" /></Pic></ViewButton>
        <Pic b="1711 998 160 18" ml={6} s="#9a9a9a" sw={1}>
          <path d="M1712 1006.500h10M1859 1006.500h10M1864 1001.500v10" stroke="#f0f0f0" strokeWidth="1.300" /><path d="M1728 1007.500h125M1790.500 1003v8" /><path d="M1761 1000h6v14h-6z" fill="#bdbdbd" stroke="none" />
        </Pic>
        <T ml={14} w={24} s={12.800}>59%</T>
      </StatusBar>
    </>
  );
}

/* ---------- taskbar ---------- */
const Taskbar = styled.div`
  height: 60px;
  flex: none;
  display: flex;
  align-items: center;
  border-top: 1px solid #45403f;
  background: linear-gradient(90deg, #222327 0, #222327 165px, #2b1d22 225px, #351829 290px, #381a25 340px, #3b1b1c 390px, #2b201e 450px, #2b2021 560px, #292429 700px, #35201f 900px, #421616 1000px, #421414 1090px, #391a1f 1180px, #33191a 1300px, #35181a 1390px, #3b1712 1460px, #4a1512 1570px, #38202c 1630px, #301d26 1700px, #3c1a1f 1790px, #3f161c 1820px, #2b1b1d 1860px, #222021 1920px);
`;
const SearchPill = styled.div`
  width: 274px;
  height: 40px;
  margin-left: 17px;
  border-radius: 20px;
  background: #4a4145;
  border: 1px solid #5a5256;
  display: flex;
  align-items: center;
`;
const PillBadge = styled.div`
  width: 66px;
  height: 34px;
  margin-left: 108px;
  border-radius: 17px;
  background: #5d5355;
  display: flex;
  align-items: center;
  justify-content: center;
`;
const AppSlot = styled.div`
  width: 50px;
  height: 50px;
  margin-left: ${p => p.$ml || 0}px;
  border-radius: 5px;
  background: ${p => (p.$on ? 'rgba(255,255,255,.08)' : 'transparent')};
  border: 1px solid ${p => (p.$on ? 'rgba(255,255,255,.1)' : 'transparent')};
  display: flex;
  flex-direction: column;
  align-items: center;
  padding-top: 9px;
`;
const Running = styled.div`
  width: ${p => (p.$on ? 20 : 8)}px;
  height: 4px;
  margin-top: 5px;
  border-radius: 2px;
  background: ${p => (p.$on ? '#f4836b' : '#9c9192')};
`;
const App50 = ({ ml = 5, on, run, children }) => (
  <AppSlot $ml={ml} $on={on}>{children}{run && <Running $on={on} />}</AppSlot>
);
function TaskBar() {
  return (
    <Taskbar>
      <Pic b="26 1026 34 40" ml={26} mt={-7} s="none">
        <defs>
          <linearGradient id="sun" x1="0" y1="0" x2="0" y2="1"><stop offset="0" stopColor="#fcc331" /><stop offset="1" stopColor="#f2701d" /></linearGradient>
          <linearGradient id="win" x1="0" y1="0" x2="1" y2="1"><stop offset="0" stopColor="#7ee8fc" /><stop offset="1" stopColor="#1597f5" /></linearGradient>
        </defs>
        <circle cx="40" cy="1049" r="12.700" fill="url(#sun)" />
        <path d="M41 1057c-4 0-4-5.500 0-5.500 1-5 8-5 9 0 6-1 6 5.500 2 5.500z" fill="#c6daf8" />
        <circle cx="49" cy="1037.500" r="10" fill="#ff99a4" />
        <text x="46" y="1042.500" fontSize="13" fill="#33181b">1</text>
      </Pic>
      <Col $ml={4} $w={88}><T w={29} s={14.500} mt={-1}>19°C</T><T w={88} s={14.500} c="#c9c6c7">Mostly sunny</T></Col>
      <Pic b="585 1036 29 29" ml={433} s="none">
        <path d="M587 1036h12v14h-14v-12a2 2 0 0 1 2-2zM600.500 1036h11.500a2 2 0 0 1 2 2v12h-13.500zM585 1051.500h14v13.500h-12a2 2 0 0 1-2-2zM600.500 1051.500h13.500v11.500a2 2 0 0 1-2 2h-11.500z" fill="url(#win)" />
      </Pic>
      <SearchPill>
        <Pic b="645 1040 20 20" ml={13} s="#f0f0f0" sw={2}><circle cx="654" cy="1048.500" r="7.300" /><path d="M659.300 1053.500l5 5.500" /></Pic>
        <T ml={12} w={51} s={15.500} c="#cfcacc">Search</T>
        <PillBadge>
          <Pic b="854 1038 30 25" s="none">
            <path d="M864 1043v-3c0-1.500 10-1.500 10 0v3" stroke="#4a3a2c" strokeWidth="2.500" /><rect x="854.500" y="1042" width="29" height="20" rx="1.500" fill="#b96a04" /><path d="M854.500 1043.500a1.500 1.500 0 0 1 1.500-1.500h26a1.500 1.500 0 0 1 1.500 1.500v8c-8 2.500-21 2.500-29 0z" fill="#f09a10" /><rect x="866" y="1050" width="6" height="6" rx="1" fill="#ffd83a" />
          </Pic>
        </PillBadge>
      </SearchPill>
      <App50 ml={6}>
        <Pic b="921 1035 30 30" s="none"><path d="M929 1036h22v20.500h-22z" fill="#f2f2f2" /><path d="M921 1044h22v20.500h-22z" fill="#8b8b8b" opacity=".85" /></Pic>
      </App50>
      <App50>
        <Pic b="976 1035 30 30" s="none">
          <circle cx="993" cy="1042" r="4.500" fill="#7b83eb" /><circle cx="1001" cy="1043.500" r="3" fill="#5059c9" /><path d="M997 1048h8v8c0 4-4 6-7 4z" fill="#5059c9" /><path d="M984 1048h14v8c0 7-12 7-13 1z" fill="#7b83eb" /><rect x="978" y="1043" width="14" height="15.500" rx="1" fill="#fff" /><path d="M981.500 1047h7M985 1047v8" stroke="#4b53bc" strokeWidth="2" />
        </Pic>
      </App50>
      <App50 run>
        <Pic b="1031 1035 30 30" s="none"><path d="M1031 1038a1.500 1.500 0 0 1 1.500-1.500h10l3 3h14a1.500 1.500 0 0 1 1.500 1.500v8h-30z" fill="#dca215" /><path d="M1031 1042h12l3-2h13.500a1.500 1.500 0 0 1 1.500 1.500V1063h-30z" fill="#ffd35a" /><path d="M1036 1064v-5.500a2.500 2.500 0 0 1 2.500-2.500h15a2.500 2.500 0 0 1 2.500 2.500v5.500z" fill="#1583d6" /><path d="M1039.500 1059.500h13" stroke="#0a4f94" strokeWidth="1.500" /></Pic>
      </App50>
      <App50>
        <Pic b="1086 1035 30 30" s="none">
          <defs><linearGradient id="edge" x1="0" y1="0" x2="1" y2="0.300"><stop offset="0" stopColor="#1fa6e8" /><stop offset=".6" stopColor="#36cfae" /><stop offset="1" stopColor="#6adf6a" /></linearGradient></defs>
          <circle cx="1101" cy="1050" r="14.800" fill="#1168bf" /><path d="M1086.500 1048c1-17 29-17 29.500 0 0 8-9 9-13 6 3-5-1-9-5-9-6 0-10 4-10.500 9-1-2-1.200-4-1-6z" fill="url(#edge)" /><path d="M1103 1054c4 3 10 2 12-1-1 4-6 8-11 7-5-1-7-8-3-11 2 1 3 3 2 5z" fill="#35201f" /><rect x="1086" y="1055" width="15" height="10" rx="1" fill="#c87408" /><path d="M1086 1056h15v4h-15z" fill="#f0a020" />
        </Pic>
      </App50>
      <App50>
        <Pic b="1141 1035 30 30" s="none"><path d="M1149 1042v-4.500h14v4.500" stroke="#2ea7e8" strokeWidth="2" /><path d="M1141.500 1041h29v20.500a3.500 3.500 0 0 1-3.500 3.500h-22a3.500 3.500 0 0 1-3.500-3.500z" fill="#f0f0f2" /><path d="M1150 1047h5.500v5.500h-5.500z" fill="#f04e1f" /><path d="M1156.500 1047h5.500v5.500h-5.500z" fill="#7fba00" /><path d="M1150 1053.500h5.500v5.500h-5.500z" fill="#0aa3ee" /><path d="M1156.500 1053.500h5.500v5.500h-5.500z" fill="#fdb900" /></Pic>
      </App50>
      <App50 run>
        <Pic b="1196 1035 30 30" s="none">
          <path d="M1211 1050L1198 1042.500A15 15 0 0 1 1224 1042.500z" fill="#e33b2e" /><path d="M1211 1050L1198 1042.500A15 15 0 0 0 1211 1065z" fill="#2da94f" /><path d="M1211 1050L1224 1042.500A15 15 0 0 1 1211 1065z" fill="#fcc934" /><path d="M1211 1043h13l-5 11zM1204 1053l7 12 6-10z" fill="#fcc934" /><path d="M1204 1053.500l7 11.500-5-1z" fill="#2da94f" />
          <circle cx="1211" cy="1050" r="7" fill="#fff" /><circle cx="1211" cy="1050" r="5.600" fill="#2a7af0" />
          <circle cx="1221.500" cy="1039.500" r="10.300" fill="#12143c" /><path d="M1214 1034c3-3 8-1 6 2s-5 5 0 6 8-2 6-5M1217 1046c3 2 7 0 9-2" stroke="#2c3768" strokeWidth="1.200" /><circle cx="1225" cy="1034" r="1.300" fill="#d8c860" />
        </Pic>
      </App50>
      <App50 run>
        <Pic b="1251 1035 30 30" s="none"><path d="M1273 1035v8l-19 15.500-3-2v-2.500z" fill="#0f74bd" /><path d="M1273 1065v-8l-19-15.500-3 2v2.500z" fill="#1a8ad4" /><path d="M1273 1035l7.500 3.500v23L1273 1065l-1.500-1.500v-27z" fill="#29a8f2" /></Pic>
      </App50>
      <App50 on run><ExcelLogo size={30} /></App50>
      <Pic b="1596 1046 15 9" ml={249} s="#fff" sw={2}><path d="M1597 1054l6.500-7 6.500 7" /></Pic>
      <Col $ml={26} $w={29} $a="center"><T w={29} s={14.300} mt={0}>ENG</T><T w={16} s={14.300}>IN</T></Col>
      <Pic b="1688 1040 20 20" ml={23} s="#fff" sw={1.700}>
        <path d="M1688.500 1047.500c5.500-5.500 13.500-5.500 19 0M1691.500 1051c4-4 9-4 13 0M1694.500 1054.300c2-2 5-2 7 0" /><circle cx="1698" cy="1057" r="1.600" fill="#fff" stroke="none" />
      </Pic>
      <Pic b="1718 1040 20 20" ml={10} s="#fff" sw={1.500}>
        <path d="M1719 1047v6h3.500l5 4.500v-15l-5 4.500zM1730.500 1046.500c2 2 2 5 0 7M1733 1044c3.500 3.500 3.500 8.500 0 12M1735.500 1041.500c4.500 5 4.500 12 0 17" />
      </Pic>
      <Pic b="1748 1040 20 20" ml={10} s="#fff" sw={1.600}>
        <path d="M1756 1043.500h7.500a2 2 0 0 1 2 2v8a2 2 0 0 1-2 2h-11a2 2 0 0 1-2-2v-3M1767.500 1047.500v4" /><path d="M1757 1046h6.500v7.500h-10v-3.500z" fill="#fff" stroke="none" /><path d="M1751.500 1040l-3 6.500h2.500l-1.500 5 5.500-7h-2.500l1.500-4.500z" fill="#fff" stroke="none" />
      </Pic>
      <Col $ml={21} $w={76} $a="flex-end"><T w={36} s={14.500} mt={-1}>07:07</T><T w={76} s={14.500}>02-03-2024</T></Col>
      <Pic b="1876 1039 18 22" ml={12} s="none"><path d="M1885 1040c5 0 7 3.500 7 7v5l1.500 4v1.500h-17V1056l1.500-4v-5c0-3.500 2-7 7-7zM1882 1059h6c-.5 2-5.500 2-6 0z" fill="#ffa17a" /></Pic>
    </Taskbar>
  );
}

export default function App() {
  return (
    <Window>
      <Global />
      <TitleBar />
      <RibbonTabs />
      <RibbonPanel>
        <Clipboard /><GroupSep />
        <FontGroup /><GroupSep />
        <Alignment /><GroupSep />
        <NumberGroup /><GroupSep />
        <Styles /><GroupSep />
        <Cells /><GroupSep />
        <Editing /><GroupSep />
        <TailGroups />
      </RibbonPanel>
      <FormulaBar />
      <Worksheet />
      <Bottom />
      <TaskBar />
    </Window>
  );
}
